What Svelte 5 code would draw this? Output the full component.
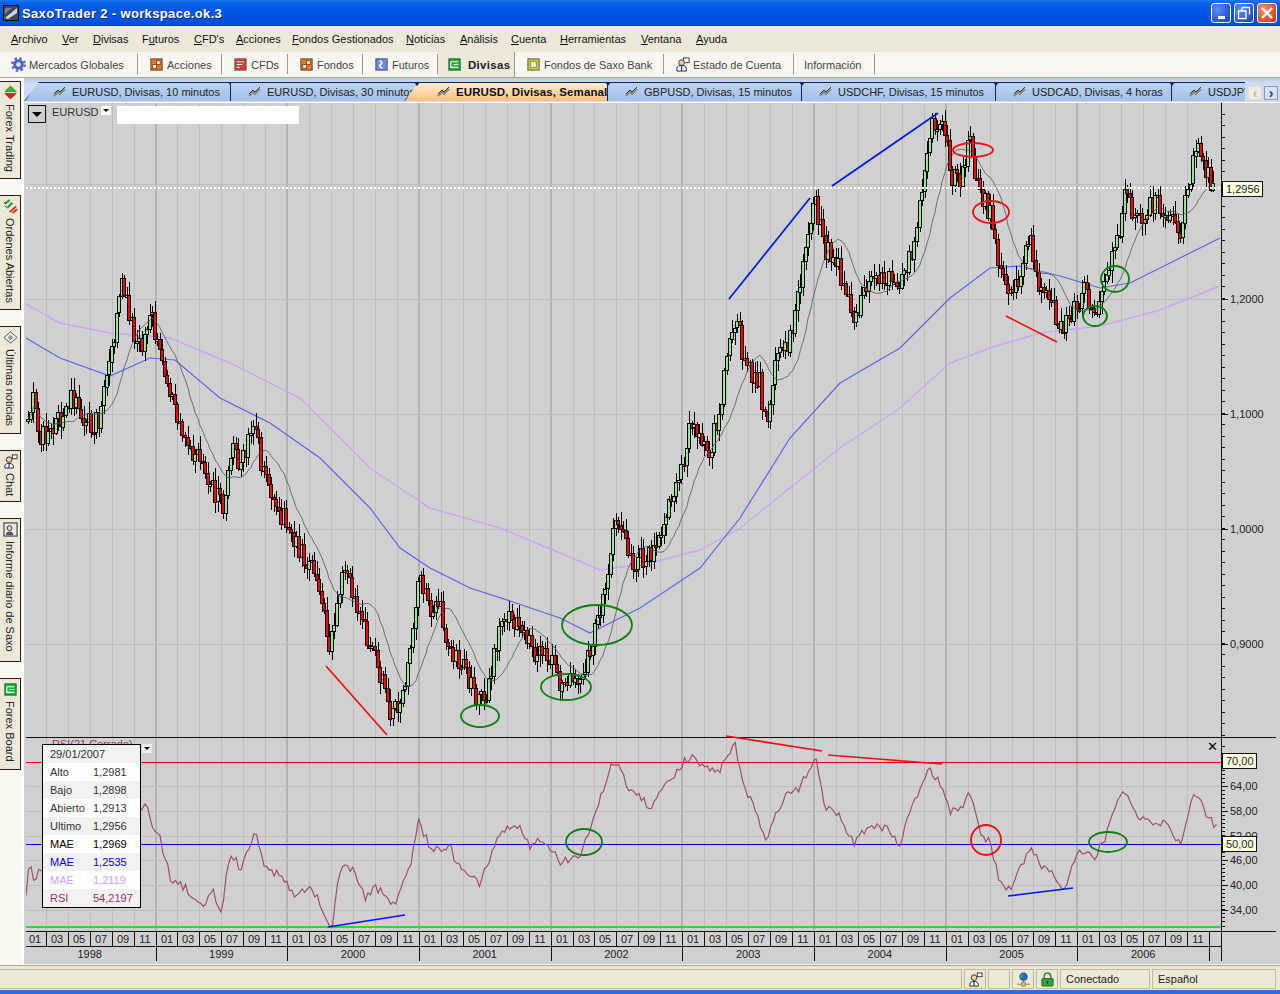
<script lang="ts">
  const menu = [
    ['', 'A', 'rchivo', 51], ['', 'V', 'er', 31], ['', 'D', 'ivisas', 49], ['F', 'u', 'turos', 52],
    ['', 'C', "FD's", 42], ['', 'A', 'cciones', 56], ['', 'F', 'ondos Gestionados', 114], ['', 'N', 'oticias', 54],
    ['', 'A', 'nálisis', 51], ['', 'C', 'uenta', 49], ['', 'H', 'erramientas', 81], ['', 'V', 'entana', 55], ['', 'A', 'yuda', 31]
  ];

  const tools = [
    { label: 'Mercados Globales', icon: 'gear', w: 138 },
    { label: 'Acciones', icon: 'boxes', w: 84 },
    { label: 'CFDs', icon: 'cfd', w: 66 },
    { label: 'Fondos', icon: 'boxes', w: 75 },
    { label: 'Futuros', icon: 'fut', w: 75 },
    { label: 'Divisas', icon: 'fx', w: 77, active: true },
    { label: 'Fondos de Saxo Bank', icon: 'fund', w: 149 },
    { label: 'Estado de Cuenta', icon: 'person', w: 130 },
    { label: 'Información', icon: '', w: 81 }
  ];

  const tabs = [
    { label: 'EURUSD, Divisas, 10 minutos', w: 207, kind: 'first' },
    { label: 'GBP', w: 0, kind: 'skip' },
    { label: 'EURUSD, Divisas, 30 minutos', w: 186, kind: '' },
    { label: 'EURUSD, Divisas, Semanal', w: 204, kind: 'active' },
    { label: 'GBPUSD, Divisas, 15 minutos', w: 194, kind: '' },
    { label: 'USDCHF, Divisas, 15 minutos', w: 194, kind: '' },
    { label: 'USDCAD, Divisas, 4 horas', w: 176, kind: '' },
    { label: 'USDJPY', w: 73, kind: 'last' }
  ].filter(t => t.kind !== 'skip');

  const sideTabs = [
    { label: 'Forex Trading', icon: 'updown', h: 98 },
    { label: 'Ordenes Abiertas', icon: 'orders', h: 115 },
    { label: 'Últimas noticias', icon: 'news', h: 108 },
    { label: 'Chat', icon: 'chat', h: 52 },
    { label: 'Informe diario de Saxo', icon: 'report', h: 144 },
    { label: 'Forex Board', icon: 'fx', h: 92 }
  ];

  const legend = [
    { k: '29/01/2007', v: '', c: '' },
    { k: 'Alto', v: '1,2981', c: '' },
    { k: 'Bajo', v: '1,2898', c: '' },
    { k: 'Abierto', v: '1,2913', c: '' },
    { k: 'Ultimo', v: '1,2956', c: '' },
    { k: 'MAE', v: '1,2969', c: 'black' },
    { k: 'MAE', v: '1,2535', c: 'blue' },
    { k: 'MAE', v: '1,2119', c: 'lilac' },
    { k: 'RSI', v: '54,2197', c: 'rsi' }
  ];

  type Pt = [number, number];

  const priceTrace: Pt[] = [[26,435],[32,395],[40,440],[55,430],[70,400],[85,425],[100,425],[108,370],[115,330],[122,280],[130,320],[140,350],[150,315],[160,350],[170,400],[185,440],[205,470],[222,510],[232,450],[240,465],[256,430],[262,470],[272,510],[285,520],[300,550],[318,580],[330,650],[340,590],[346,570],[360,620],[375,660],[390,710],[400,715],[407,680],[418,580],[430,610],[440,610],[450,650],[465,670],[475,700],[485,700],[500,630],[512,620],[525,640],[535,655],[550,660],[560,685],[580,680],[590,650],[600,620],[612,540],[622,520],[630,560],[650,560],[665,520],[680,480],[690,430],[708,460],[720,410],[728,350],[736,315],[745,370],[760,385],[768,435],[775,360],[790,340],[800,290],[815,205],[825,250],[835,260],[855,320],[870,275],[885,280],[900,290],[915,240],[930,130],[943,115],[950,175],[960,185],[970,135],[978,190],[990,215],[1000,270],[1012,305],[1030,240],[1040,290],[1050,300],[1062,335],[1075,310],[1085,290],[1095,315],[1105,290],[1118,240],[1125,195],[1140,225],[1150,205],[1165,210],[1180,240],[1195,150],[1205,165],[1213,195],[1218,195]];
  const maeBlue: Pt[] = [[26,340],[60,360],[110,378],[150,360],[175,362],[220,400],[270,425],[320,460],[370,510],[400,550],[430,570],[470,590],[510,603],[560,620],[590,635],[640,610],[700,570],[740,520],[790,440],[840,385],[900,350],[950,300],[990,270],[1020,268],[1060,278],[1100,290],[1130,285],[1180,260],[1220,240]];
  const maeLilac: Pt[] = [[26,306],[60,325],[110,335],[170,340],[230,365],[300,400],[370,470],[430,510],[500,530],[560,555],[600,572],[650,565],[700,552],[740,530],[790,490],[840,450],[900,410],[950,365],[990,350],[1040,335],[1100,328],[1160,312],[1220,288]];
  const rsiTrace: Pt[] = [[26,897],[29,865],[34,885],[38,875],[42,877],[141,815],[146,806],[151,825],[156,835],[160,836],[164,860],[168,870],[172,885],[180,885],[190,895],[197,905],[205,910],[212,892],[222,912],[228,862],[234,858],[240,870],[245,860],[250,845],[256,838],[262,860],[270,875],[278,875],[285,885],[295,895],[305,890],[315,895],[325,920],[332,928],[338,885],[345,865],[355,875],[365,900],[375,890],[385,895],[395,910],[405,880],[412,860],[418,823],[428,845],[440,855],[450,850],[460,870],[470,880],[480,885],[490,860],[500,835],[510,830],[520,825],[530,850],[540,840],[550,850],[560,865],[570,860],[580,855],[590,835],[600,800],[612,765],[620,770],[628,790],[640,800],[650,810],[665,790],[675,775],[690,758],[700,765],[710,775],[720,770],[735,745],[745,790],[755,810],[765,845],[775,820],[785,800],[800,790],[815,757],[825,810],[840,820],[855,845],[870,825],[885,830],[900,845],[915,800],[930,770],[943,790],[950,815],[960,810],[970,795],[980,835],[990,845],[1000,885],[1012,890],[1030,850],[1040,865],[1055,880],[1065,890],[1080,850],[1095,860],[1105,840],[1118,800],[1125,797],[1135,815],[1150,825],[1165,825],[1180,845],[1195,792],[1205,815],[1217,830]];

  function interp(trace: Pt[], x: number) {
    for (let i = 1; i < trace.length; i++) {
      if (x <= trace[i][0]) {
        const [x0, y0] = trace[i - 1];
        const [x1, y1] = trace[i];
        return y0 + (y1 - y0) * (x - x0) / (x1 - x0);
      }
    }
    return trace[trace.length - 1][1];
  }

  let seed = 20070129;
  function rnd() {
    seed = (seed * 1664525 + 1013904223) % 4294967296;
    return seed / 4294967296;
  }

  const weekW = 131.7 / 52;
  const weeks = Math.floor((1218 - 28) / weekW);
  let prev = interp(priceTrace, 28);
  const candles = [];
  for (let i = 0; i < weeks; i++) {
    const x = 28 + i * weekW;
    const close = interp(priceTrace, x) + (rnd() - 0.5) * 22;
    const top = Math.min(prev, close);
    const bot = Math.max(prev, close);
    candles.push({
      x: Math.round(x),
      close,
      top: Math.round(top),
      h: Math.max(2, Math.round(bot - top)),
      hi: Math.round(top - 2 - rnd() * 11),
      lo: Math.round(bot + 2 + rnd() * 11),
      up: close < prev
    });
    prev = close;
  }
  const line = (pts: Pt[]) => pts.map(p => p.join(',')).join(' ');
  const maeFast = line(candles.map((c, i) => {
    const w = candles.slice(Math.max(0, i - 14), i + 1);
    return [c.x, +(w.reduce((s, e) => s + e.close, 0) / w.length).toFixed(1)] as Pt;
  }));
  const rsiPts: Pt[] = [];
  for (let x = 26; x < 1218; x += weekW) {
    rsiPts.push([+x.toFixed(1), +(interp(rsiTrace, x) + (rnd() - 0.5) * 9).toFixed(1)]);
  }
  const wicks = candles.map(c => `M${c.x} ${c.hi}V${c.lo}`).join('');

  const yearX = 23.8;
  const yearW = 131.7;
  const years = Array.from({ length: 9 }, (_, i) => ({ year: 1998 + i, x: yearX + i * yearW }));
  const months = years.flatMap(y => [1, 3, 5, 7, 9, 11].map((m, j) => ({
    label: String(m).padStart(2, '0'),
    x: Math.round(y.x + j * yearW / 6)
  })));

  const priceLabels = [{ t: '1,2000', y: 301 }, { t: '1,1000', y: 416 }, { t: '1,0000', y: 531 }, { t: '0,9000', y: 646 }];
  const priceTicks = Array.from({ length: 56 }, (_, i) => 116 + i * 11.5);
  const rsiLabels = [{ t: '64,00', y: 788 }, { t: '58,00', y: 813 }, { t: '52,00', y: 838 }, { t: '46,00', y: 862 }, { t: '40,00', y: 887 }, { t: '34,00', y: 912 }];
  const rsiTicks = Array.from({ length: 41 }, (_, i) => 764 + i * 4.1);

  const ellipses = [
    { c: 'eg', x: 480, y: 718, rx: 19, ry: 11 }, { c: 'eg', x: 566, y: 689, rx: 25, ry: 13 },
    { c: 'eg', x: 597, y: 627, rx: 35, ry: 20 }, { c: 'eg', x: 1095, y: 318, rx: 12, ry: 10 },
    { c: 'eg', x: 1115, y: 281, rx: 14, ry: 13 }, { c: 'eg', x: 584, y: 844, rx: 18, ry: 13 },
    { c: 'eg', x: 1108, y: 844, rx: 19, ry: 10 }, { c: 'er', x: 973, y: 152, rx: 20, ry: 7 },
    { c: 'er', x: 991, y: 214, rx: 18, ry: 11 }, { c: 'er', x: 986, y: 842, rx: 15, ry: 15 }
  ];
  const trendLines = [
    { c: 'tb', p: [729, 301, 810, 200] }, { c: 'tb', p: [832, 188, 938, 115] },
    { c: 'tb', p: [1008, 898, 1073, 890] }, { c: 'tb', p: [328, 929, 405, 917] },
    { c: 'tr', p: [326, 668, 387, 737] }, { c: 'tr', p: [1006, 318, 1057, 344] },
    { c: 'tr', p: [726, 738, 822, 753] }, { c: 'tr', p: [828, 757, 942, 766] }
  ];
</script>

{#snippet icon(kind: string)}
  <svg class="ico" viewBox="0 0 16 16" aria-hidden="true">
    {#if kind === 'gear'}
      <circle cx="8" cy="8" r="6.6" fill="none" stroke="#5b67c9" stroke-width="2.6" stroke-dasharray="2.6 2.6" />
      <circle cx="8" cy="8" r="4" fill="none" stroke="#5060c8" stroke-width="3.2" />
      <circle cx="8" cy="8" r="2" fill="#dfe2f8" />
    {:else if kind === 'boxes'}
      <rect x="2" y="2" width="12" height="12" fill="#e8771f" stroke="#444" />
      <rect x="8" y="4" width="4" height="4" fill="#fff" stroke="#a04010" />
      <rect x="4" y="8" width="4" height="4" fill="#fff" stroke="#a04010" />
    {:else if kind === 'cfd'}
      <rect x="2" y="2" width="12" height="12" fill="#d83a3a" stroke="#555" />
      <path d="M4 5h8M4 8h6M4 11h3" stroke="#fff" stroke-width="1.2" />
    {:else if kind === 'fut'}
      <rect x="2" y="2" width="12" height="12" fill="#6f8fe6" stroke="#445" />
      <path d="M6 4c3 1 3 3 1 4s-1 3 2 4" fill="none" stroke="#fff" stroke-width="1.6" />
    {:else if kind === 'fx'}
      <rect x="2" y="2" width="12" height="12" fill="#18b83a" stroke="#1a5a2a" />
      <path d="M4 5h8M4 5v6h8M7 8h5" fill="none" stroke="#fff" stroke-width="1.2" />
    {:else if kind === 'fund'}
      <rect x="2" y="2" width="12" height="12" fill="#c0d040" stroke="#555" />
      <rect x="5" y="5" width="6" height="6" fill="#fff" stroke="#809020" />
    {:else if kind === 'person'}
      <rect x="9" y="1" width="6" height="5" fill="#fff" stroke="#333" />
      <circle cx="7" cy="6" r="3" fill="#f3cfa2" stroke="#333" />
      <path d="M2 15v-3c0-2 2-3 5-3s5 1 5 3v3z" fill="#fff" stroke="#223" />
      <path d="M7 9v6" stroke="#2040b0" stroke-width="1.4" />
    {:else if kind === 'updown'}
      <path d="M8 1l6 6H2z" fill="#22c022" stroke="#0a6a0a" stroke-width=".6" />
      <path d="M8 15l-6-6h12z" fill="#e02020" stroke="#7a0a0a" stroke-width=".6" />
    {:else if kind === 'orders'}
      <path d="M2 5l5-4M5 9l5-5" stroke="#149a2a" stroke-width="2" />
      <path d="M7 14l7-6M10 15l5-4" stroke="#d83030" stroke-width="2" />
      <path d="M2 7l3 3M1 3l2 2" stroke="#333" />
    {:else if kind === 'news'}
      <path d="M1 8l7-6 7 6-7 6z" fill="#eee" stroke="#555" />
      <path d="M5 8l3-3 3 3-3 3z" fill="#999" />
    {:else if kind === 'chat'}
      <rect x="10" y="1" width="5" height="4" fill="#fff" stroke="#333" />
      <circle cx="6.5" cy="6" r="3" fill="#f3cfa2" stroke="#333" />
      <path d="M2 15v-2c0-2 2-3 4.500-3s4.500 1 4.500 3v2z" fill="#fff" stroke="#223" />
      <path d="M6.500 10v5" stroke="#2040b0" stroke-width="1.4" />
    {:else if kind === 'report'}
      <rect x="1" y="1" width="14" height="14" fill="#dfe8f2" stroke="#222" />
      <circle cx="7" cy="6.500" r="2.600" fill="#f3cfa2" stroke="#333" />
      <path d="M3 14c0-3 2-4 4-4s4 1 4 4z" fill="#556" />
    {:else if kind === 'net'}
      <circle cx="8" cy="5" r="4.500" fill="#1f60c8" />
      <path d="M6 2c2 0 3 2 1 4s-2 1-3 0" fill="#2ea043" />
      <path d="M8 9v3M1 13h14" stroke="#777" />
      <rect x="6" y="11" width="4" height="4" fill="#f0c040" stroke="#886" />
    {:else if kind === 'lock'}
      <path d="M4.500 7V4.500a3.500 3.500 0 0 1 7 0V7" fill="none" stroke="#2f8a3c" stroke-width="1.6" />
      <rect x="2" y="7" width="12" height="8" rx="1" fill="#35a048" stroke="#1d6a2c" />
      <path d="M8 9l-1.500 2h1V13h1v-2h1z" fill="#0f3f18" />
    {/if}
  </svg>
{/snippet}

{#snippet tabIcon()}
  <svg class="tab-ico" viewBox="0 0 14 10" aria-hidden="true">
    <path d="M1 9l4-4 2 2 5-5" fill="none" stroke="#888" stroke-width="2" />
    <path d="M1 7l4-4 2 2 5-5" fill="none" stroke="#333" stroke-width="1" />
  </svg>
{/snippet}

<div class="window">
  <header class="titlebar">
    <svg class="app-ico" viewBox="0 0 16 16" aria-hidden="true">
      <rect x=".5" y=".5" width="15" height="15" fill="#3a4a5a" stroke="#111" />
      <path d="M2 13L14 3v5L5 14z" fill="#cfd8e2" />
      <path d="M2 3h7L2 9z" fill="#6f8095" />
    </svg>
    <span class="title-text">SaxoTrader 2 - workspace.ok.3</span>
    <div class="win-btns">
      <button class="win-btn" aria-label="Minimizar"><span class="min-bar"></span></button>
      <button class="win-btn" aria-label="Restaurar">
        <svg viewBox="0 0 14 14"><path d="M5 1.500h7.500v7M1.500 5h7.500v7.500H1.500z M5 1.500v3.500" fill="none" stroke="#fff" stroke-width="1.300" /></svg>
      </button>
      <button class="win-btn close" aria-label="Cerrar">
        <svg viewBox="0 0 14 14"><path d="M2 2l10 10M12 2L2 12" stroke="#fff" stroke-width="2.400" /></svg>
      </button>
    </div>
  </header>

  <nav class="menubar">
    {#each menu as m}
      <span class="menu-item" style="width:{m[3]}px">{m[0]}<u>{m[1]}</u>{m[2]}</span>
    {/each}
  </nav>

  <div class="toolbar">
    {#each tools as t}
      <div class="tool" class:active={t.active} class:plain={!t.icon} style="width:{t.w}px">
        {#if t.icon}{@render icon(t.icon)}{/if}
        <span>{t.label}</span>
      </div>
    {/each}
  </div>

  <div class="workspace">
    <aside class="sidebar">
      {#each sideTabs as s}
        <div class="side-tab" style="height:{s.h}px">
          {@render icon(s.icon)}
          <span class="side-label">{s.label}</span>
        </div>
      {/each}
    </aside>

    <main class="main">
      <div class="tabbar">
        <div class="tabs">
          {#each tabs as t}
            <div class="tab {t.kind}" style="width:{t.w}px">
              {#if t.kind === 'first' || t.kind === 'active'}
                <svg class="slant" viewBox="0 0 16 20" aria-hidden="true"><path d="M0 20C6 15 6 1 15 .5" fill="none" stroke="#0a246a" /></svg>
              {/if}
              {@render tabIcon()}
              <span class="tab-label">{t.label}</span>
            </div>
          {/each}
        </div>
        <div class="tab-scroll">
          <span class="scroll-btn off">‹</span>
          <span class="scroll-btn">›</span>
        </div>
      </div>

      <div class="chart">
        <svg class="plot" viewBox="26 105 1250 858" width="1250" height="858" aria-label="EURUSD semanal">
          {#each months as m}
            <line class="grid" x1={m.x + .5} x2={m.x + .5} y1="105" y2="933" />
          {/each}
          {#each years as y}
            <line class="grid-year" x1={Math.round(y.x)} x2={Math.round(y.x)} y1="105" y2="933" />
          {/each}
          {#each priceLabels as l}
            <line class="grid" x1="26" x2="1221" y1={l.y} y2={l.y} />
          {/each}
          <line class="grid" x1="26" x2="1221" y1="186" y2="186" />
          {#each rsiLabels as l}
            <line class="grid" x1="26" x2="1221" y1={l.y} y2={l.y} />
          {/each}

          <polyline class="mae-lilac" points={line(maeLilac)} />
          <polyline class="mae-blue" points={line(maeBlue)} />
          <path class="wick" d={wicks} />
          {#each candles as c}
            <rect class={c.up ? 'body up' : 'body down'} x={c.x - 1.5} y={c.top + .5} width="3" height={c.h} />
          {/each}
          <polyline class="mae-fast" points={maeFast} />
          <line class="last-price" x1="26" x2="1221" y1="190" y2="190" />

          <line class="panel-line" x1="26" x2="1276" y1="739.500" y2="739.500" />
          <text class="rsi-title" x="52" y="750">RSI(21,Cerrado)</text>
          <line class="level70" x1="26" x2="1221" y1="764" y2="764" />
          <line class="level50" x1="26" x2="1221" y1="846" y2="846" />
          <line class="level0" x1="26" x2="1221" y1="929" y2="929" />
          <polyline class="rsi" points={line(rsiPts)} />

          {#each trendLines as t}
            <line class={t.c} x1={t.p[0]} y1={t.p[1]} x2={t.p[2]} y2={t.p[3]} />
          {/each}
          {#each ellipses as e}
            <ellipse class={e.c} cx={e.x} cy={e.y} rx={e.rx} ry={e.ry} />
          {/each}

          <line class="panel-line" x1="26" x2="1276" y1="933.500" y2="933.500" />
          <line class="panel-line" x1="26" x2="1221" y1="948.500" y2="948.500" />
          <line class="panel-line" x1="1221.500" x2="1221.500" y1="105" y2="963" />
          {#each priceTicks as y}
            <line class="panel-line" x1="1222" x2="1225" y1={y} y2={y} />
          {/each}
          {#each rsiTicks as y}
            <line class="panel-line" x1="1222" x2="1225" y1={y} y2={y} />
          {/each}
          {#each priceLabels as l}
            <line class="panel-line" x1="1222" x2="1228" y1={l.y} y2={l.y} />
            <text class="axis" x="1230" y={l.y + 4}>{l.t}</text>
          {/each}
          {#each rsiLabels as l}
            <line class="panel-line" x1="1222" x2="1228" y1={l.y} y2={l.y} />
            <text class="axis" x="1230" y={l.y + 4}>{l.t}</text>
          {/each}

          {#each months as m}
            <line class="panel-line" x1={m.x + .5} x2={m.x + .5} y1="933" y2="948" />
            {#if m.x + 11 > 30}
              <text class="axis mid" x={Math.max(m.x + 11, 34)} y="945">{m.label}</text>
            {/if}
          {/each}
          {#each years as y}
            <line class="panel-line" x1={Math.round(y.x) + .5} x2={Math.round(y.x) + .5} y1="933" y2="963" />
            <text class="axis mid" x={y.x + yearW / 2} y="960">{y.year}</text>
          {/each}
          <line class="panel-line" x1="1209.500" x2="1209.500" y1="933" y2="963" />
        </svg>

        <button class="corner-btn" aria-label="Menú"><span class="tri"></span></button>
        <span class="symbol">EURUSD</span>
        <span class="mini-drop sym"><span class="tri small"></span></span>
        <span class="symbol-input"></span>
        <span class="mini-drop rsi-drop"><span class="tri small"></span></span>
        <span class="close-x">✕</span>

        <span class="flag last">1,2956</span>
        <span class="flag l70">70,00</span>
        <span class="flag l50">50,00</span>

        <div class="legend">
          {#each legend as r}
            <div class="legend-row {r.c}">
              <span class="legend-key">{r.k}</span>
              <span>{r.v}</span>
            </div>
          {/each}
        </div>
      </div>
    </main>
  </div>

  <footer class="statusbar">
    <div class="cell grow"></div>
    <div class="cell ic">{@render icon('chat')}</div>
    <div class="cell ic"></div>
    <div class="cell ic">{@render icon('net')}</div>
    <div class="cell ic">{@render icon('lock')}</div>
    <div class="cell conn">Conectado</div>
    <div class="cell lang">Español</div>
  </footer>
  <div class="frame-bottom"></div>
</div>

<style>
  :global(body) { margin: 0; background: #ece9d8; }

  .window {
    width: 1280px; height: 994px; display: flex; flex-direction: column; overflow: hidden;
    font-family: "Liberation Sans", Arial, sans-serif; font-size: 11px; color: #222;
    background: #ece9d8;
  }

  .titlebar {
    height: 26px; flex: none; display: flex; align-items: center; padding-left: 3px;
    background: linear-gradient(#1b78f0 0, #0a62ea 3px, #0158e4 9px, #0054e0 18px, #0050d8 23px, #0040c0 26px);
    color: #fff;
  }
  .app-ico { width: 16px; height: 16px; }
  .title-text {
    margin-left: 3px; font-size: 13px; font-weight: 700; letter-spacing: .35px;
    font-family: "Liberation Sans", sans-serif; text-shadow: 1px 1px 0 #0a2a90;
  }
  .win-btns { margin-left: auto; display: flex; gap: 3px; padding-right: 3px; }
  .win-btn {
    width: 20px; height: 20px; padding: 2px; border: 1px solid #fff; border-radius: 3px;
    background: radial-gradient(circle at 30% 30%, #5e8cf0, #2a55d8 70%, #1a3fc0);
    display: flex; align-items: flex-end; justify-content: center; box-sizing: border-box;
  }
  .win-btn svg { width: 14px; height: 14px; display: block; }
  .win-btn.close { background: radial-gradient(circle at 30% 30%, #f09070, #d9532a 65%, #b83a18); }
  .min-bar { width: 7px; height: 3px; background: #fff; margin-bottom: 1px; }

  .menubar {
    height: 26px; flex: none; display: flex; align-items: center; padding-left: 11px;
    font-size: 11px; color: #111;
  }
  .menu-item { flex: none; white-space: nowrap; }

  .toolbar {
    height: 25px; flex: none; display: flex; background: #f8f8f0;
    border-bottom: 1px solid #aca899; font-size: 11px; color: #444;
  }
  .tool {
    flex: none; box-sizing: border-box; display: flex; align-items: center; gap: 3px;
    padding-left: 11px; position: relative; white-space: nowrap;
  }
  .tool::after {
    content: ''; position: absolute; right: 0; top: 2px; bottom: 3px; width: 1px; background: #a09c8c;
  }
  .tool.plain { padding-left: 10px; }
  .tool.active {
    background: #ece9d8; font-weight: 700; font-size: 11.500px; color: #222; letter-spacing: .3px;
    border-right: 1px solid #a09c8c; padding-left: 9px; gap: 6px;
  }
  .tool.active::after { display: none; }
  .ico { width: 15px; height: 15px; flex: none; display: block; }

  .workspace { flex: 1; min-height: 0; display: flex; background: #f8f8f0; }

  .sidebar {
    width: 24px; flex: none; box-sizing: border-box; padding-top: 3px;
    display: flex; flex-direction: column; gap: 16px; overflow: hidden;
    border-right: 2px solid #fff;
  }
  .side-tab {
    box-sizing: border-box; width: 21px; flex: none; background: #ece9d8;
    border: 1px solid #222; border-left: none;
    display: flex; flex-direction: column; align-items: center; gap: 4px; padding-top: 3px; overflow: hidden;
  }
  .side-label { writing-mode: vertical-rl; font-size: 11px; white-space: nowrap; color: #222; }

  .main { flex: 1; min-width: 0; display: flex; flex-direction: column; }

  .tabbar {
    height: 25px; flex: none; display: flex; align-items: flex-end; position: relative;
    background: linear-gradient(#b8cbe9, #cfdcf2 5px);
    border-bottom: 1px solid #ffffff; box-sizing: border-box;
  }
  .tabs { display: flex; height: 19px; margin-bottom: 1px; flex: none; }
  .tab {
    box-sizing: border-box; height: 19px; flex: none; position: relative; display: flex; align-items: center;
    gap: 5px; padding-left: 17px; white-space: nowrap; overflow: visible;
    background: linear-gradient(#bcd3f2, #a4bfea); color: #222;
    border-top: 1px solid #0a246a; border-right: 1px solid #0a246a; font-size: 11px;
  }
  .tab::after {
    content: ''; position: absolute; right: -4px; top: -1px;
    border-left: 3.500px solid transparent; border-right: 3.500px solid transparent; border-top: 4px solid #0a246a;
    z-index: 2;
  }
  .tab.first {
    padding-left: 29px; clip-path: polygon(0 100%, 15px 0, 100% 0, calc(100% + 6px) 0, calc(100% + 6px) 100%);
  }
  .tab.active {
    margin-left: -13px; padding-left: 33px; gap: 5px; z-index: 1; font-weight: 700; font-size: 11.500px;
    letter-spacing: .1px; color: #111; background: linear-gradient(#ffecd0, #fdc080);
    border-top-color: #0a246a; clip-path: polygon(0 100%, 15px 0, calc(100% + 6px) 0, calc(100% + 6px) 100%);
  }
  .tab.last { border-right: none; overflow: hidden; }
  .tab.last::after { display: none; }
  .tab-label { display: block; }
  .tab-ico { width: 14px; height: 10px; flex: none; }
  .slant { position: absolute; left: 0; top: -1px; width: 16px; height: 19px; }

  .tab-scroll {
    position: absolute; right: 0; bottom: 2px; display: flex; gap: 2px; padding: 0 2px 0 3px;
    background: #cfdcf2; align-items: center;
  }
  .scroll-btn {
    width: 14px; height: 14px; box-sizing: border-box; border: 1px solid #7f9db9; background: #d8e4f6;
    display: flex; align-items: center; justify-content: center; font-size: 14px; font-weight: 700;
    color: #223a80; line-height: 1;
  }
  .scroll-btn.off { background: #efede2; color: #b8b8b0; border-color: #e0ddd0; }

  .chart { position: relative; height: 861px; margin-left: 0; padding-top: 0; background: #d0d0d0; overflow: hidden; }
  .plot { display: block; margin-left: 2px; }
  .plot text { font-family: "Liberation Sans", Arial, sans-serif; }

  .grid { stroke: #bebebe; stroke-width: 1; shape-rendering: crispEdges; }
  .grid-year { stroke: #b2b2b2; stroke-width: 2; shape-rendering: crispEdges; }
  .wick { stroke: #000; stroke-width: 1; fill: none; shape-rendering: crispEdges; }
  .body { stroke: #000; stroke-width: 1; shape-rendering: crispEdges; }
  .up { fill: #90e890; }
  .down { fill: #f00; }
  .mae-fast { fill: none; stroke: #5e5e5e; stroke-width: 1; opacity: .85; }
  .mae-blue { fill: none; stroke: #5e62e8; stroke-width: 1.200; }
  .mae-lilac { fill: none; stroke: #c8a8f0; stroke-width: 1.400; }
  .last-price { stroke: #fff; stroke-width: 2; stroke-dasharray: 2 2; }
  .panel-line { stroke: #111; stroke-width: 1; shape-rendering: crispEdges; }
  .level70 { stroke: #e80000; stroke-width: 1; shape-rendering: crispEdges; }
  .level50 { stroke: #0000e0; stroke-width: 1; shape-rendering: crispEdges; }
  .level0 { stroke: #22e022; stroke-width: 1.500; shape-rendering: crispEdges; }
  .rsi { fill: none; stroke: #9a5070; stroke-width: 1.200; }
  .tb { stroke: #0018e8; stroke-width: 1.700; }
  .tr { stroke: #ee1010; stroke-width: 1.700; }
  .eg { fill: none; stroke: #0d800d; stroke-width: 1.800; }
  .er { fill: none; stroke: #ee1010; stroke-width: 1.800; }
  .rsi-title { fill: #993366; font-size: 11px; }
  .axis { fill: #222; font-size: 11px; }
  .mid { text-anchor: middle; }

  .corner-btn {
    position: absolute; left: 4px; top: 2px; width: 18px; height: 18px; padding: 0;
    background: #d0d0d0; border: 1px solid #111; display: flex; align-items: center; justify-content: center;
  }
  .tri { width: 0; height: 0; border-left: 5px solid transparent; border-right: 5px solid transparent; border-top: 5px solid #000; display: block; }
  .tri.small { border-left-width: 3px; border-right-width: 3px; border-top-width: 3px; }
  .symbol { position: absolute; left: 28px; top: 3px; color: #333; }
  .mini-drop {
    position: absolute; width: 10px; height: 9px; background: #fff;
    display: flex; align-items: center; justify-content: center;
  }
  .mini-drop.sym { left: 77px; top: 3px; }
  .mini-drop.rsi-drop { left: 118px; top: 641px; background: #eee; }
  .symbol-input { position: absolute; left: 93px; top: 3px; width: 182px; height: 18px; background: #fff; }
  .close-x { position: absolute; left: 1183px; top: 636px; font-size: 13px; color: #000; }

  .flag {
    position: absolute; left: 1198px; box-sizing: border-box; height: 16px; padding: 0 3px; line-height: 14px;
    background: #ffffe1; border: 1px solid #111; color: #222;
  }
  .flag.last { top: 78px; width: 41px; }
  .flag.l70 { top: 650px; width: 35px; }
  .flag.l50 { top: 733px; width: 35px; }

  .legend {
    position: absolute; left: 18px; top: 641px; width: 99px; box-sizing: border-box;
    border: 1px solid #000; background: #fff; color: #333; font-size: 11px;
  }
  .legend-row { height: 18px; display: flex; align-items: center; padding-left: 7px; box-sizing: border-box; }
  .legend-row:nth-child(odd) { background: #f2f2f2; }
  .legend-key { width: 43px; white-space: nowrap; }
  .legend-row.black { color: #000; }
  .legend-row.blue { color: #0000e8; }
  .legend-row.lilac { color: #c8a0ff; }
  .legend-row.rsi { color: #993366; }

  .statusbar {
    height: 25px; flex: none; display: flex; gap: 2px; box-sizing: border-box; padding: 3px 4px 1px 0;
    background: #ece9d8; border-top: 1px solid #aca899;
  }
  .cell { box-sizing: border-box; border: 1px solid #bdb9a6; display: flex; align-items: center; flex: none; }
  .cell.grow { flex: 1; border-left: none; }
  .cell.ic { width: 22px; justify-content: center; }
  .cell.conn { width: 90px; padding-left: 5px; }
  .cell.lang { width: 124px; padding-left: 5px; }

  .frame-bottom { height: 4px; flex: none; background: #2a6ee0; }
</style>
